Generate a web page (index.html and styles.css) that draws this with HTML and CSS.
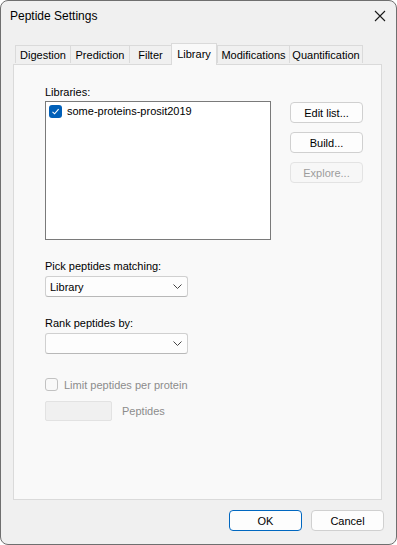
FILE: index.html
```html
<!DOCTYPE html>
<html lang="en">
<head>
  <meta charset="UTF-8" />
  <title>Peptide Settings</title>
  <link rel="stylesheet" href="styles.css">
</head>
<body>
  <div class="window">
    <div class="titlebar">
      <span class="title">Peptide Settings</span>
      <svg class="close" width="12" height="12" viewBox="0 0 12 12">
        <path d="M1 1 L11 11 M11 1 L1 11" stroke="#1a1a1a" stroke-width="1.1" fill="none"/>
      </svg>
    </div>

    <div class="tabs">
      <div class="tab tab-digestion">Digestion</div>
      <div class="tab tab-prediction">Prediction</div>
      <div class="tab tab-filter">Filter</div>
      <div class="tab tab-library active">Library</div>
      <div class="tab tab-mods">Modifications</div>
      <div class="tab tab-quant">Quantification</div>
    </div>

    <div class="panel">
      <div class="lib-row">
        <div class="lib-left">
          <div class="label">Libraries:</div>
          <div class="listbox">
            <div class="list-item">
              <span class="check checked">
                <svg width="9" height="9" viewBox="0 0 9 9"><path d="M1.5 4.8 L3.6 6.8 L7.6 2.2" stroke="#fff" stroke-width="1.1" fill="none"/></svg>
              </span>
              <span>some-proteins-prosit2019</span>
            </div>
          </div>
        </div>
        <div class="lib-buttons">
          <button class="btn">Edit list...</button>
          <button class="btn">Build...</button>
          <button class="btn disabled">Explore...</button>
        </div>
      </div>

      <div class="field">
        <div class="label">Pick peptides matching:</div>
        <div class="combo">
          <span>Library</span>
          <svg class="chevron" width="9" height="5" viewBox="0 0 9 5"><path d="M0.5 0.5 L4.5 4.5 L8.5 0.5" stroke="#444" stroke-width="1" fill="none"/></svg>
        </div>
      </div>

      <div class="field">
        <div class="label">Rank peptides by:</div>
        <div class="combo">
          <span></span>
          <svg class="chevron" width="9" height="5" viewBox="0 0 9 5"><path d="M0.5 0.5 L4.5 4.5 L8.5 0.5" stroke="#444" stroke-width="1" fill="none"/></svg>
        </div>
      </div>

      <div class="limit-row">
        <span class="check disabled-check"></span>
        <span class="muted">Limit peptides per protein</span>
      </div>

      <div class="count-row">
        <div class="textbox"></div>
        <span class="muted">Peptides</span>
      </div>
    </div>

    <div class="footer">
      <button class="btn btn-default">OK</button>
      <button class="btn">Cancel</button>
    </div>
  </div>
</body>
</html>
```

FILE: styles.css
```css
html {
  background-color: #ffffff;
}
body {
  margin: 0;
  font-family: 'Liberation Sans', Arial, sans-serif;
  font-size: 11px;
  color: #000;
}
.window {
  width: 397px;
  height: 545px;
  box-sizing: border-box;
  border: 1px solid #6f6f6f;
  border-radius: 8px;
  background-color: #f0f0f0;
  display: flex;
  flex-direction: column;
  overflow: hidden;
}
.titlebar {
  height: 29px;
  display: flex;
  align-items: center;
  justify-content: space-between;
  padding: 0 9px 0 9px;
}
.title {
  font-size: 12px;
  margin-top: 1px;
}
.close {
  margin-right: 1px;
}
.tabs {
  display: flex;
  align-items: flex-end;
  margin-top: 13px;
  padding-left: 14px;
  height: 21px;
  position: relative;
  z-index: 1;
}
.tab {
  box-sizing: border-box;
  height: 18px;
  margin-bottom: 1px;
  border: 1px solid #dadada;
  border-bottom: none;
  border-right: none;
  background-color: #f0f0f0;
  display: flex;
  align-items: center;
  justify-content: center;
  padding-top: 1px;
}
.tab-digestion { width: 55px; }
.tab-prediction { width: 59px; }
.tab-filter { width: 42px; }
.tab-library { width: 46px; }
.tab-mods { width: 72px; }
.tab-quant { width: 74px; border-right: 1px solid #dadada; }
.tab.active {
  height: 22px;
  margin-bottom: -1px;
  background-color: #f9f9f9;
  border-right: 1px solid #dadada;
  padding-bottom: 3px;
}
.panel {
  margin: 0 14px 0 12px;
  height: 436px;
  box-sizing: border-box;
  border: 1px solid #dadada;
  background-color: #f9f9f9;
  padding: 20px 0 0 31px;
}
.label {
  line-height: 15px;
  height: 15px;
}
.lib-row {
  display: flex;
  gap: 19px;
}
.lib-left .label {
  margin-bottom: 1px;
}
.listbox {
  width: 226px;
  height: 139px;
  box-sizing: border-box;
  border: 1px solid #7a7a7a;
  background-color: #fff;
  padding: 2px 0 0 2px;
}
.list-item {
  display: flex;
  align-items: center;
  gap: 5px;
  line-height: 15px;
}
.check {
  width: 13px;
  height: 13px;
  box-sizing: border-box;
  border-radius: 3px;
  display: inline-flex;
  align-items: center;
  justify-content: center;
}
.check.checked {
  background-color: #005fb8;
  margin-left: 1px;
}
.disabled-check {
  border: 1px solid #c2c2c2;
  background-color: #f9f9f9;
}
.lib-buttons {
  margin-top: 17px;
  display: flex;
  flex-direction: column;
  gap: 9px;
}
.btn {
  width: 73px;
  height: 21px;
  box-sizing: border-box;
  border: 1px solid #d0d0d0;
  border-radius: 4px;
  background-color: #fdfdfd;
  font-family: 'Liberation Sans', Arial, sans-serif;
  font-size: 11px;
  color: #000;
  padding: 0;
}
.btn.disabled {
  color: #9c9c9c;
  border-color: #e3e3e3;
  background-color: #f7f7f7;
}
.field {
  margin-top: 19px;
}
.field .label {
  margin-bottom: 2px;
}
.combo {
  width: 143px;
  height: 21px;
  box-sizing: border-box;
  border: 1px solid #d0d0d0;
  border-bottom-color: #b8b8b8;
  border-radius: 3px;
  background-color: #fdfdfd;
  display: flex;
  align-items: center;
  justify-content: space-between;
  padding: 0 5px 0 4px;
}
.chevron {
  margin-bottom: 1px;
}
.limit-row {
  margin-top: 23px;
  display: flex;
  align-items: center;
  gap: 6px;
  height: 15px;
}
.muted {
  color: #8c8c8c;
}
.count-row {
  margin-top: 9px;
  display: flex;
  align-items: center;
  gap: 10px;
}
.textbox {
  width: 67px;
  height: 20px;
  box-sizing: border-box;
  border: 1px solid #e2e2e2;
  border-radius: 2px;
  background-color: #f0f0f0;
}
.footer {
  display: flex;
  justify-content: flex-end;
  gap: 9px;
  padding: 10px 12px 0 0;
}
.btn-default {
  border-color: #0067c0;
}
```
